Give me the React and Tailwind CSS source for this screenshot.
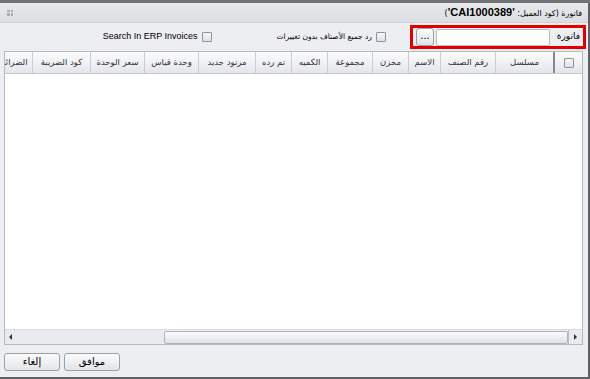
const columns = [
  { label: "مسلسل", w: "w-[58px]" },
  { label: "رقم الصنف", w: "w-[55px]" },
  { label: "الاسم", w: "w-[32px]" },
  { label: "مخزن", w: "w-[36px]" },
  { label: "مجموعة", w: "w-[45px]" },
  { label: "الكميه", w: "w-[36px]" },
  { label: "تم رده", w: "w-[36px]" },
  { label: "مرتود جديد", w: "w-[57px]" },
  { label: "وحدة قياس", w: "w-[54px]" },
  { label: "سعر الوحدة", w: "w-[54px]" },
  { label: "كود الضريبة", w: "w-[58px]" },
  { label: "الضرائب", w: "w-[40px]" },
];

function Check() {
  return (
    <span className="inline-block h-[10px] w-[10px] shrink-0 rounded-[1px] border border-[#8d949c] bg-gradient-to-b from-[#f4f5f6] to-[#dfe2e5]" />
  );
}

function Btn({ children, className = "" }) {
  return (
    <button
      type="button"
      className={`flex h-[18px] items-center justify-center rounded-[3px] border border-[#9ba1a8] bg-gradient-to-b from-[#fbfbfc] to-[#e2e5e8] text-[10px] text-black ${className}`}
    >
      {children}
    </button>
  );
}

export default function App() {
  return (
    <div
      className="flex h-[379px] w-[590px] flex-col overflow-hidden bg-[#6d6d6d] text-[10px] text-black"
      style={{ fontFamily: '"DejaVu Sans", "Liberation Sans", sans-serif' }}
    >
      <div className="h-[3px] shrink-0 bg-[#737373]" />

      <div className="flex min-h-0 flex-1 flex-col border-r-2 border-b-2 border-[#5f6163] bg-[#eceef1]">
        {/* title bar */}
        <div className="flex h-[20px] shrink-0 items-center justify-between border-b border-[#cdd0d4] bg-gradient-to-b from-[#e7e9ec] to-[#dcdfe2] pl-[7px] pr-[6px]">
          <span className="grid h-[6px] w-[6px] grid-cols-2 gap-px opacity-60">
            <span className="bg-[#8c8c8c]" />
            <span className="bg-[#8c8c8c]" />
            <span className="bg-[#8c8c8c]" />
            <span className="bg-[#8c8c8c]" />
          </span>
          <span dir="rtl" className="text-[8px]">
            فاتورة (كود العميل:{" "}
            <b className="font-['Liberation_Sans'] text-[11px] font-bold">'CAI1000389'</b>)
          </span>
        </div>

        {/* toolbar */}
        <div dir="rtl" className="flex h-[28px] shrink-0 items-center pr-[2px]">
          <div className="flex h-[24px] w-[176px] items-center border-[3px] border-[#e00000] pr-[3px]">
            <span className="w-[30px] text-[9px]">فاتورة</span>
            <input
              type="text"
              className="h-[17px] w-[114px] rounded-[2px] border border-[#b8bdc3] bg-white outline-none"
            />
            <Btn className="mr-[2px] w-[18px] pb-[3px] text-[9px]">...</Btn>
          </div>
          <label className="mr-[24px] flex items-center gap-[4px]">
            <Check />
            <span className="text-[7.5px]">رد جميع الأصناف بدون تغييرات</span>
          </label>
          <label className="mr-[65px] flex items-center gap-[4px]">
            <Check />
            <span dir="ltr" className="font-['Liberation_Sans'] text-[9px]">
              Search In ERP Invoices
            </span>
          </label>
        </div>

        {/* grid */}
        <div className="ml-[4px] flex h-[294px] w-[579px] shrink-0 flex-col border border-[#b5bac0] bg-white">
          <div
            dir="rtl"
            className="flex h-[22px] shrink-0 overflow-hidden border-b border-[#c7cbd0] bg-gradient-to-b from-[#fcfcfd] to-[#e3e6e9]"
          >
            <div className="flex w-[29px] shrink-0 items-center justify-center border-l-2 border-[#7f8b97]">
              <Check />
            </div>
            {columns.map((c) => (
              <div
                key={c.label}
                className={`flex shrink-0 items-center justify-center whitespace-nowrap border-l border-[#c9cdd2] text-[8.5px] text-[#333] ${c.w}`}
              >
                {c.label}
              </div>
            ))}
          </div>
          <div className="flex-1" />
          <div className="flex h-[15px] shrink-0 items-center border-t border-[#d9dce0] bg-[#e9ebee]">
            <span className="ml-[4px] h-0 w-0 border-y-[3px] border-r-[3px] border-y-transparent border-r-[#333]" />
            <div className="ml-[152px] h-[13px] flex-1 rounded-[2px] border border-[#aeb4bb] bg-gradient-to-b from-[#fafbfc] to-[#dfe2e6]" />
            <div className="flex h-[14px] w-[14px] items-center justify-center border-l border-[#b9bec4]">
              <span className="h-0 w-0 border-y-[3px] border-l-[3px] border-y-transparent border-l-[#333]" />
            </div>
          </div>
        </div>

        {/* footer */}
        <div className="flex flex-1 items-center gap-[4px] pl-[4px] pt-[1px]">
          <Btn className="w-[56px] text-[9px]">إلغاء</Btn>
          <Btn className="w-[56px] text-[9px]">موافق</Btn>
        </div>
      </div>
    </div>
  );
}
